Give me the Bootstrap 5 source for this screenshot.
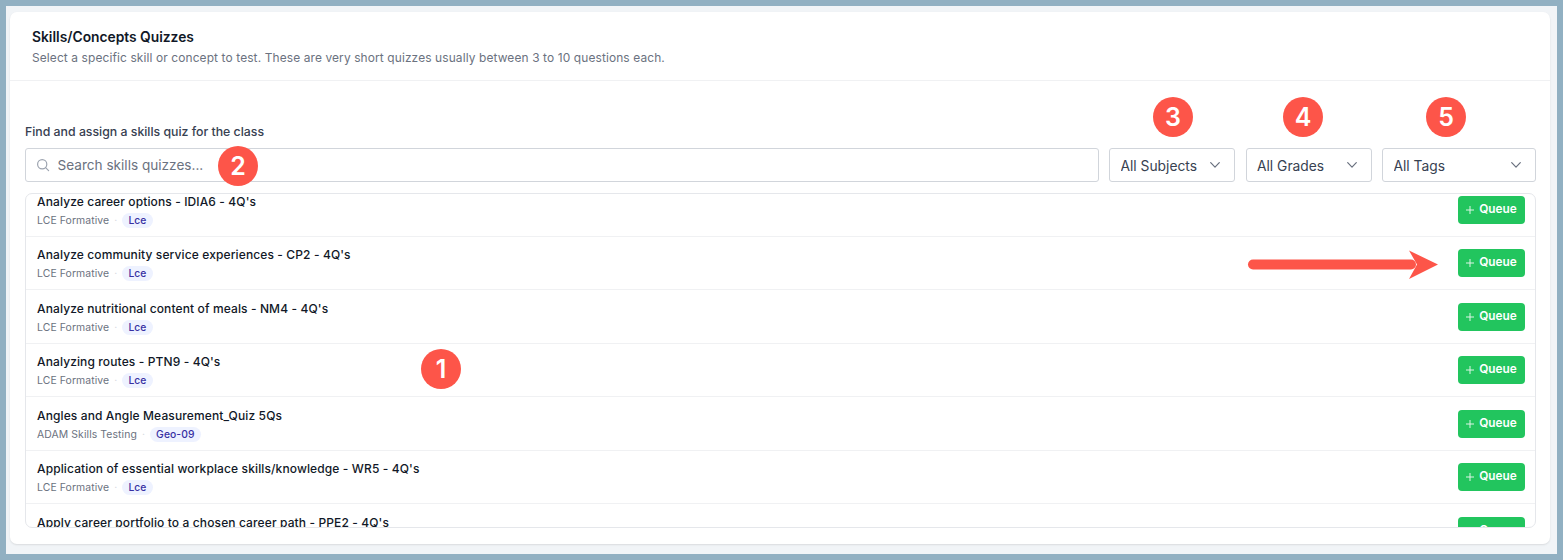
<!DOCTYPE html>
<html lang="en">
<head>
<meta charset="utf-8">
<title>Skills/Concepts Quizzes</title>
<link href="https://cdn.jsdelivr.net/npm/bootstrap@5.3.0/dist/css/bootstrap.min.css" rel="stylesheet">
<style>
html,body{height:100%;}
body{margin:0;background:#91b0c2;font-family:Inter,"Liberation Sans",sans-serif;color:#111827;overflow:hidden;}
.frame{position:relative;height:548px;margin:6px;background:#f1f4f7;padding:6px 7px 10px 4px;width:1551px;}
.panel{height:532px;background:#fff;border-radius:7px;box-shadow:0 1px 2px rgba(0,0,0,.1);display:flex;flex-direction:column;}
.panel-head{height:69px;border-bottom:1px solid #f0f1f3;padding:16px 22px 0;}
.panel-title{font-size:13.8px;font-weight:600;line-height:18px;color:#111827;margin:0 0 3px;}
.panel-sub{font-size:11.93px;line-height:18px;color:#6b7280;margin:0;letter-spacing:.01em;}
.panel-body{padding:0 14px 15px 15px;flex:1;min-height:0;display:flex;flex-direction:column;}
.filter-row{height:101px;padding-top:43px;gap:10.5px;}
.find-label{font-size:12.3px;font-weight:500;color:#374151;line-height:16px;margin-bottom:8px;display:block;}
.search-wrap{position:relative;}
.search-wrap svg{position:absolute;left:11px;top:10px;}
.search-input.form-control{height:34px;border:1px solid #d1d5db;border-radius:3px;font-size:13.6px;padding:0 0 0 31.5px;color:#374151;box-shadow:none;}
.search-input::placeholder{color:#6b7280;opacity:1;}
.pick.form-select{height:34px;border:1px solid #d1d5db;border-radius:3px;font-size:13.8px;padding:3px 0 0 10.5px;color:#374151;background-image:url("data:image/svg+xml,%3Csvg xmlns='http://www.w3.org/2000/svg' viewBox='0 0 10 6'%3E%3Cpath d='M.7.7L5 5.200 9.300.7' fill='none' stroke='%236b7280' stroke-width='1.200' stroke-linecap='round' stroke-linejoin='round'/%3E%3C/svg%3E");background-size:10px 6px;background-position:right 14px top 13px;box-shadow:none;}
.w-subject{width:126px;}.w-grade{width:126px;}.w-tag{width:154px;}
.search-col{flex:1;min-width:0;}
.quiz-box{height:335px;margin-top:11px;border:1px solid #e5e7eb;border-radius:7px;overflow:hidden;}
.quiz-list{margin-top:-11px;}
.quiz-row{height:53.5px;border-bottom:1px solid #f0f1f3;padding:3px 10px 0 11px;}
.quiz-title{font-size:12px;font-weight:500;line-height:16px;color:#111827;margin-bottom:3px;letter-spacing:.01em;}
.quiz-meta{font-size:10.4px;color:#6b7280;line-height:15px;gap:5px;letter-spacing:.01em;}
.dot-sep{color:#d1d5db;}
.tag-pill{background:#eef2ff;color:#3730a3;font-size:10.3px;font-weight:500;line-height:15px;border-radius:8px;padding:0 6px;}
.queue-btn.btn{background:#22c55e;border:0;color:#fff;font-size:11.8px;font-weight:600;height:28px;width:67px;border-radius:4px;padding:0;gap:5px;margin-bottom:2px;}
.queue-btn svg{opacity:.85;}
.callout{position:absolute;width:40px;height:40px;border-radius:50%;background:#fd5549;color:#fff;font-size:25px;font-weight:600;line-height:40px;text-align:center;font-family:Inter,sans-serif;}
.c1{left:415px;top:343px;}.c2{left:212px;top:140px;}.c3{left:1147px;top:91px;}.c4{left:1277px;top:91px;}.c5{left:1420px;top:91px;}
.arrow-mark{position:absolute;left:1240px;top:243px;}
</style>
</head>
<body>
<div class="frame">
  <div class="panel">
    <div class="panel-head">
      <h1 class="panel-title">Skills/Concepts Quizzes</h1>
      <p class="panel-sub">Select a specific skill or concept to test. These are very short quizzes usually between 3 to 10 questions each.</p>
    </div>
    <div class="panel-body">
      <div class="d-flex align-items-end filter-row">
        <div class="search-col">
          <label class="find-label" for="q">Find and assign a skills quiz for the class</label>
          <div class="search-wrap">
            <svg width="14" height="14" viewBox="0 0 14 14" fill="none" stroke="#9ca3af" stroke-width="1.2" stroke-linecap="round"><circle cx="6.2" cy="6.2" r="4.6"/><path d="M9.6 9.6l3 3"/></svg>
            <input id="q" class="form-control search-input" placeholder="Search skills quizzes...">
          </div>
        </div>
        <select class="form-select pick w-subject"><option>All Subjects</option></select>
        <select class="form-select pick w-grade"><option>All Grades</option></select>
        <select class="form-select pick w-tag"><option>All Tags</option></select>
      </div>
      <div class="quiz-box">
        <div class="quiz-list" id="list"></div>
      </div>
    </div>
  </div>
  <div class="callout c1">1</div>
  <div class="callout c2">2</div>
  <div class="callout c3">3</div>
  <div class="callout c4">4</div>
  <div class="callout c5">5</div>
  <svg class="arrow-mark" width="194" height="32" viewBox="0 0 194 32"><path d="M7 15.500H165" stroke="#fd5549" stroke-width="10" stroke-linecap="round" fill="none"/><path d="M163 1.500L192 15.500L163 30L171 15.500Z" fill="#fd5549"/></svg>
</div>
<script>
var rows=[["Analyze career options - IDIA6 - 4Q's","LCE Formative","Lce"],
["Analyze community service experiences - CP2 - 4Q's","LCE Formative","Lce"],
["Analyze nutritional content of meals - NM4 - 4Q's","LCE Formative","Lce"],
["Analyzing routes - PTN9 - 4Q's","LCE Formative","Lce"],
["Angles and Angle Measurement_Quiz 5Qs","ADAM Skills Testing","Geo-09"],
["Application of essential workplace skills/knowledge - WR5 - 4Q's","LCE Formative","Lce"],
["Apply career portfolio to a chosen career path - PPE2 - 4Q's","LCE Formative","Lce"]];
document.getElementById('list').innerHTML=rows.map(function(r){
return '<div class="quiz-row d-flex align-items-center justify-content-between"><div><div class="quiz-title">'+r[0]+'</div><div class="quiz-meta d-flex align-items-center"><span>'+r[1]+'</span><span class="dot-sep">·</span><span class="tag-pill">'+r[2]+'</span></div></div><button class="btn queue-btn d-flex align-items-center justify-content-center"><svg width="8" height="8" viewBox="0 0 8 8" stroke="#fff" stroke-width="1"><path d="M4 0v8M0 4h8"/></svg><span>Queue</span></button></div>';
}).join('');
</script>
<script src="https://cdn.jsdelivr.net/npm/bootstrap@5.3.0/dist/js/bootstrap.bundle.min.js"></script>
</body>
</html>
